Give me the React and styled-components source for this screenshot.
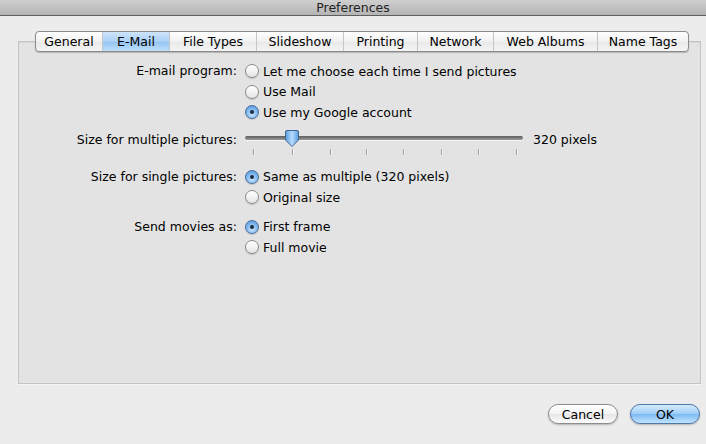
import styled, { createGlobalStyle } from "styled-components";

const GlobalStyle = createGlobalStyle`
  html, body {
    margin: 0;
    padding: 0;
    background: #ececec;
  }
  body {
    font-family: "DejaVu Sans", "Liberation Sans", sans-serif;
    font-size: 12.5px;
    color: #000;
  }
`;

const Window = styled.div`
  width: 706px;
  height: 444px;
  overflow: hidden;
  display: flex;
  flex-direction: column;
  background: #ececec;
`;

const TitleBar = styled.div`
  height: 15px;
  flex: none;
  display: flex;
  align-items: center;
  justify-content: center;
  background: linear-gradient(#cfcfcf, #b4b4b4);
  border-bottom: 1px solid #5e5e5e;
  font-size: 12.5px;
  color: #222;
  line-height: 12px;
`;

const Body = styled.div`
  flex: 1;
  display: flex;
  flex-direction: column;
  padding: 15px 5px 0 18px;
`;

const TabBar = styled.div`
  align-self: flex-start;
  margin-left: 17px;
  display: flex;
  height: 19px;
  border: 1px solid #8a8a8a;
  border-radius: 4px;
  background: linear-gradient(#ffffff, #f1f1f1 50%, #e8e8e8 51%, #f5f5f5);
  box-shadow: 0 1px 1px rgba(0, 0, 0, 0.2);
  position: relative;
  z-index: 1;
  overflow: hidden;
`;

const Tab = styled.div`
  width: ${(p) => p.$w}px;
  display: flex;
  align-items: center;
  justify-content: center;
  font-size: 12.5px;
  white-space: nowrap;
  border-left: ${(p) => (p.$first ? "none" : "1px solid #c6c6c6")};
  background: ${(p) =>
    p.$active
      ? "linear-gradient(#cfe4fb, #a9d0f6 50%, #93c2f2 51%, #bfe0fc)"
      : "transparent"};
`;

const Panel = styled.div`
  margin-top: -11px;
  height: 343px;
  box-sizing: border-box;
  background: #e3e3e3;
  border: 1px solid #c4c4c4;
  box-shadow: inset 0 1px 0 #d6d6d6, 0 1px 0 #f6f6f6;
  padding-top: 19px;
`;

const Form = styled.div`
  display: grid;
  grid-template-columns: 218px 1fr;
  column-gap: 8px;
`;

const Label = styled.div`
  text-align: right;
  line-height: 20.5px;
  margin-top: ${(p) => p.$top || 0}px;
  padding-top: ${(p) => p.$pad || 0}px;
  white-space: nowrap;
`;

const Group = styled.div`
  display: flex;
  flex-direction: column;
  margin-top: ${(p) => p.$top || 0}px;
`;

const RadioRow = styled.div`
  height: 20.5px;
  display: flex;
  align-items: center;
  gap: 4px;
  white-space: nowrap;
`;

const RadioCircle = styled.span`
  width: 14px;
  height: 14px;
  flex: none;
  border-radius: 50%;
  box-sizing: border-box;
  border: 1px solid ${(p) => (p.$on ? "#4a6d99" : "#8a8a8a")};
  background: ${(p) =>
    p.$on
      ? "radial-gradient(circle at 50% 70%, #c6e4ff 0%, #7db6ee 55%, #4f8fd6 100%)"
      : "linear-gradient(#ffffff, #f2f2f2 50%, #e4e4e4 100%)"};
  box-shadow: 0 1px 1px rgba(0, 0, 0, 0.15);
  display: flex;
  align-items: center;
  justify-content: center;

  &::after {
    content: "";
    display: ${(p) => (p.$on ? "block" : "none")};
    width: 4px;
    height: 4px;
    border-radius: 50%;
    background: #1c2a3a;
  }
`;

const SliderRow = styled.div`
  display: flex;
  align-items: flex-start;
  gap: 10px;
`;

const SliderWrap = styled.div`
  position: relative;
  width: 278px;
  height: 30px;
`;

const Track = styled.div`
  position: absolute;
  left: 0;
  right: 0;
  top: 7px;
  height: 4px;
  border-radius: 2px;
  background: linear-gradient(#5c5c5c, #9a9a9a);
  box-shadow: 0 1px 0 #f5f5f5;
`;

const Tick = styled.span`
  position: absolute;
  top: 20px;
  width: 1px;
  height: 6px;
  background: #a0a0a0;
  box-shadow: 1px 0 0 #f6f6f6;
`;

const Thumb = styled.svg`
  position: absolute;
  top: 0;
`;

const SliderValue = styled.div`
  line-height: 20.5px;
  padding-top: 1px;
  white-space: nowrap;
`;

const Footer = styled.div`
  display: flex;
  justify-content: flex-end;
  gap: 12px;
  padding-top: 20px;
  padding-right: 1px;
`;

const Button = styled.div`
  width: 70px;
  height: 20px;
  box-sizing: border-box;
  border-radius: 10px;
  display: flex;
  align-items: center;
  justify-content: center;
  font-size: 12.5px;
  border: 1px solid ${(p) => (p.$primary ? "#4f76a8" : "#8c8c8c")};
  background: ${(p) =>
    p.$primary
      ? "linear-gradient(#d4ebfd, #9fcdf7 50%, #7cb9f1 51%, #c2e4ff)"
      : "linear-gradient(#ffffff, #f3f3f3 50%, #e6e6e6 51%, #fbfbfb)"};
  box-shadow: 0 1px 2px rgba(0, 0, 0, 0.25);
`;

const tabs = [
  { name: "General", w: 66 },
  { name: "E-Mail", w: 66 },
  { name: "File Types", w: 86 },
  { name: "Slideshow", w: 86 },
  { name: "Printing", w: 73 },
  { name: "Network", w: 75 },
  { name: "Web Albums", w: 103 },
  { name: "Name Tags", w: 90 },
];

const ticks = [8, 47, 85, 121, 158, 196, 233, 271];

function Radio({ on, children }) {
  return (
    <RadioRow>
      <RadioCircle $on={on} />
      <span>{children}</span>
    </RadioRow>
  );
}

export default function App() {
  return (
    <Window>
      <GlobalStyle />
      <TitleBar>Preferences</TitleBar>
      <Body>
        <TabBar>
          {tabs.map((t, i) => (
            <Tab key={t.name} $w={t.w} $first={i === 0} $active={t.name === "E-Mail"}>
              {t.name}
            </Tab>
          ))}
        </TabBar>
        <Panel>
          <Form>
            <Label>E-mail program:</Label>
            <Group>
              <Radio>Let me choose each time I send pictures</Radio>
              <Radio>Use Mail</Radio>
              <Radio on>Use my Google account</Radio>
            </Group>

            <Label $top={6} $pad={1}>Size for multiple pictures:</Label>
            <Group $top={6}>
              <SliderRow>
                <SliderWrap>
                  <Track />
                  {ticks.map((x) => (
                    <Tick key={x} style={{ left: x }} />
                  ))}
                  <Thumb
                    style={{ left: 39 }}
                    width="16"
                    height="19"
                    viewBox="0 0 16 19"
                  >
                    <defs>
                      <linearGradient id="thumbFill" x1="0" y1="0" x2="1" y2="0">
                        <stop offset="0" stopColor="#5d9be0" />
                        <stop offset="0.5" stopColor="#b7dcfd" />
                        <stop offset="1" stopColor="#5d9be0" />
                      </linearGradient>
                    </defs>
                    <path
                      d="M3 1.5 H13 Q14.5 1.5 14.5 3 V11 L8 17.5 L1.5 11 V3 Q1.5 1.5 3 1.5 Z"
                      fill="url(#thumbFill)"
                      stroke="#3e6496"
                      strokeWidth="1"
                    />
                  </Thumb>
                </SliderWrap>
                <SliderValue>320 pixels</SliderValue>
              </SliderRow>
            </Group>

            <Label $top={8}>Size for single pictures:</Label>
            <Group $top={8}>
              <Radio on>Same as multiple (320 pixels)</Radio>
              <Radio>Original size</Radio>
            </Group>

            <Label $top={9}>Send movies as:</Label>
            <Group $top={9}>
              <Radio on>First frame</Radio>
              <Radio>Full movie</Radio>
            </Group>
          </Form>
        </Panel>
        <Footer>
          <Button>Cancel</Button>
          <Button $primary>OK</Button>
        </Footer>
      </Body>
    </Window>
  );
}
